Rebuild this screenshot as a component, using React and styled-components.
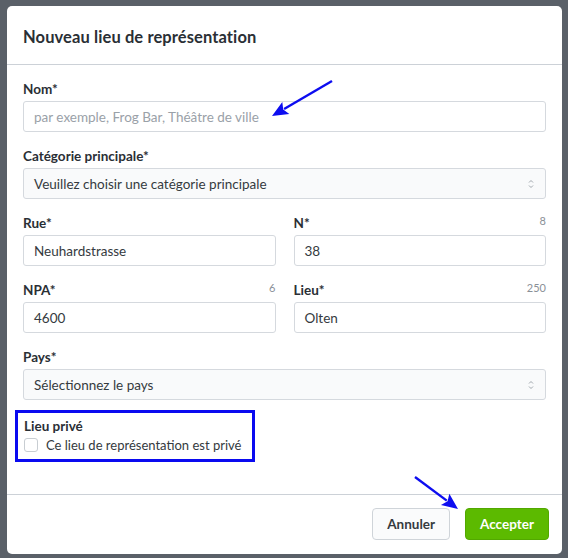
import React from "react";
import styled, { createGlobalStyle } from "styled-components";

const Global = createGlobalStyle`
  html, body { margin: 0; padding: 0; }
  body {
    background: #5a6068;
    font-family: "Lato", "Open Sans", sans-serif;
    color: #212529;
  }
  * { box-sizing: border-box; }
`;

const Backdrop = styled.div`
  width: 568px;
  height: 558px;
  padding: 6px 6px 4px 7px;
  background: #5a6068;
`;

const Modal = styled.div`
  position: relative;
  width: 555px;
  height: 548px;
  background: #fff;
  border-radius: 5px;
  display: flex;
  flex-direction: column;
`;

const Header = styled.div`
  height: 59px;
  flex: none;
  border-bottom: 1px solid #ccd1d7;
  display: flex;
  align-items: center;
  padding: 4px 16px 0;
  h2 {
    margin: 0;
    font-size: 16.5px;
    font-weight: 700;
    color: #2a2f35;
    letter-spacing: 0.1px;
  }
`;

const Body = styled.div`
  flex: 1;
  padding: 12px 16px 0 16px;
`;

const Field = styled.div`
  margin-bottom: 12px;
`;

const LabelRow = styled.div`
  display: flex;
  justify-content: space-between;
  align-items: flex-end;
  height: 20px;
  margin-bottom: 4px;
`;

const Label = styled.label`
  font-size: 13.5px;
  font-weight: 700;
  color: #2a2f35;
`;

const Count = styled.span`
  font-size: 11px;
  color: #8a9097;
  padding-bottom: 4px;
`;

const Input = styled.div`
  height: 31px;
  border: 1px solid #d5d9de;
  border-radius: 3px;
  background: ${(p) => (p.$select ? "#f9fafb" : "#fff")};
  display: flex;
  align-items: center;
  justify-content: space-between;
  padding: 0 10px;
  font-size: 13.5px;
  color: ${(p) => (p.$placeholder ? "#9aa1a8" : "#353a40")};
`;

const Row = styled.div`
  display: grid;
  grid-template-columns: 1fr 1fr;
  column-gap: 18px;
`;

const PrivateBox = styled.div`
  width: 240px;
  margin: -2px 0 0 -8px;
  border: 3px solid #0a0af0;
  padding: 2px 4px 6px 6px;
`;

const CheckLine = styled.div`
  display: flex;
  align-items: center;
  gap: 8px;
  margin-top: 3px;
  font-size: 13px;
  color: #353a40;
  white-space: nowrap;
`;

const Check = styled.span`
  flex: none;
  width: 14px;
  height: 14px;
  border: 1px solid #c8cdd2;
  border-radius: 3px;
  background: #fff;
`;

const Footer = styled.div`
  height: 60px;
  flex: none;
  border-top: 1px solid #ccd1d7;
  display: flex;
  justify-content: flex-end;
  align-items: flex-start;
  gap: 15px;
  padding: 13px 13px 0 0;
`;

const Button = styled.button`
  height: 32px;
  padding: 0 14px;
  border-radius: 4px;
  font-family: inherit;
  font-size: 13.5px;
  font-weight: 700;
  border: 1px solid ${(p) => (p.$primary ? "#52a800" : "#cfd4d9")};
  background: ${(p) => (p.$primary ? "#5cba00" : "#fafbfc")};
  color: ${(p) => (p.$primary ? "#fff" : "#353a40")};
`;

const Arrow = styled.svg`
  position: absolute;
  left: 0;
  top: 0;
  pointer-events: none;
  overflow: visible;
`;

const Spinner = () => (
  <svg width="8" height="12" viewBox="0 0 8 12">
    <path d="M2 4.5 L4 2.5 L6 4.5" fill="none" stroke="#a0a6ad" strokeWidth="1" />
    <path d="M2 7.5 L4 9.5 L6 7.5" fill="none" stroke="#a0a6ad" strokeWidth="1" />
  </svg>
);

const BlueArrow = ({ x1, y1, x2, y2 }) => {
  const ang = Math.atan2(y2 - y1, x2 - x1);
  const L = 16;
  const W = 7;
  const bx = x2 - L * Math.cos(ang);
  const by = y2 - L * Math.sin(ang);
  const px = -Math.sin(ang) * W;
  const py = Math.cos(ang) * W;
  return (
    <Arrow width="1" height="1">
      <line x1={x1} y1={y1} x2={bx + 2 * Math.cos(ang)} y2={by + 2 * Math.sin(ang)} stroke="#0d0df0" strokeWidth="2.4" />
      <polygon
        points={`${x2},${y2} ${bx + px},${by + py} ${bx + 3 * Math.cos(ang)},${by + 3 * Math.sin(ang)} ${bx - px},${by - py}`}
        fill="#0d0df0"
      />
    </Arrow>
  );
};

export default function App() {
  return (
    <>
      <Global />
      <Backdrop>
        <Modal>
          <Header>
            <h2>Nouveau lieu de représentation</h2>
          </Header>
          <Body>
            <Field>
              <LabelRow>
                <Label>Nom*</Label>
              </LabelRow>
              <Input $placeholder>par exemple, Frog Bar, Théâtre de ville</Input>
            </Field>
            <Field>
              <LabelRow>
                <Label>Catégorie principale*</Label>
              </LabelRow>
              <Input $select>
                Veuillez choisir une catégorie principale
                <Spinner />
              </Input>
            </Field>
            <Row>
              <Field>
                <LabelRow>
                  <Label>Rue*</Label>
                </LabelRow>
                <Input>Neuhardstrasse</Input>
              </Field>
              <Field>
                <LabelRow>
                  <Label>N*</Label>
                  <Count>8</Count>
                </LabelRow>
                <Input>38</Input>
              </Field>
            </Row>
            <Row>
              <Field>
                <LabelRow>
                  <Label>NPA*</Label>
                  <Count>6</Count>
                </LabelRow>
                <Input>4600</Input>
              </Field>
              <Field>
                <LabelRow>
                  <Label>Lieu*</Label>
                  <Count>250</Count>
                </LabelRow>
                <Input>Olten</Input>
              </Field>
            </Row>
            <Field>
              <LabelRow>
                <Label>Pays*</Label>
              </LabelRow>
              <Input $select>
                Sélectionnez le pays
                <Spinner />
              </Input>
            </Field>
            <PrivateBox>
              <Label>Lieu privé</Label>
              <CheckLine>
                <Check />
                Ce lieu de représentation est privé
              </CheckLine>
            </PrivateBox>
          </Body>
          <Footer>
            <Button>Annuler</Button>
            <Button $primary>Accepter</Button>
          </Footer>
          <BlueArrow x1={325} y1={75} x2={265} y2={110} />
          <BlueArrow x1={408} y1={471} x2={451} y2={503} />
        </Modal>
      </Backdrop>
    </>
  );
}
